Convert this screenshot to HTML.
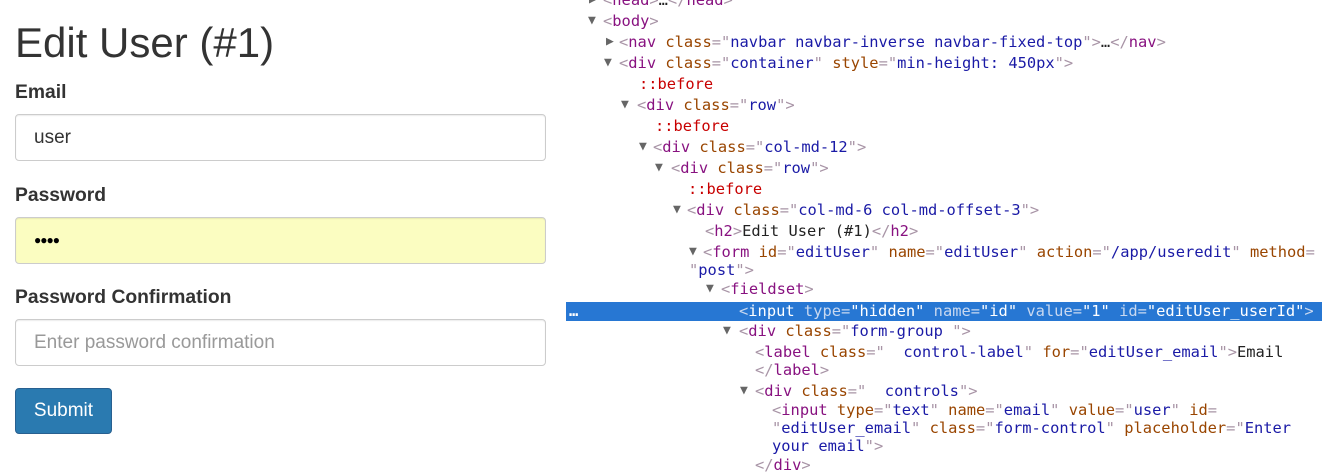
<!DOCTYPE html>
<html><head><meta charset="utf-8"><style>
body{margin:0;width:1324px;height:465px;overflow:hidden;background:#fff;position:relative;font-family:"Liberation Sans",sans-serif;color:#333}
h2{position:absolute;left:15px;top:18px;margin:0;font-size:42px;font-weight:normal;line-height:50px;color:#333}
.lb{position:absolute;left:15px;font-weight:bold;font-size:19.3px}
.in{position:absolute;left:15px;height:45px;border:1px solid #ccc;border-radius:4px;box-sizing:content-box;font-size:19px;line-height:45px;padding-left:18px;width:511px;box-shadow:inset 0 1px 1px rgba(0,0,0,.075)}
.btn{position:absolute;left:15px;top:388px;width:97px;height:46px;background:#2a7ab0;border:1px solid #286090;border-radius:4px;box-sizing:border-box;color:#fff;font-size:19px;line-height:44px;text-align:center}
.d{position:absolute;left:566px;top:0;width:758px;height:465px;font-family:"DejaVu Sans Mono","Liberation Mono",monospace;font-size:15.4px;color:#222}
.l{position:absolute;white-space:pre;line-height:20px}
.g{color:#a894a6}.t{color:#881280}.a{color:#994500}.v{color:#1a1aa6}.r{color:#c80000}
.tri{position:absolute;font-size:13px;color:#666;line-height:20px}
.sel{position:absolute;left:0;top:302px;width:756px;height:19px;background:#2777d3}
</style></head><body>
<h2>Edit User (#1)</h2>
<div class="lb" style="top:82px">Email</div>
<div class="in" style="top:114px">user</div>
<div class="lb" style="top:185px">Password</div>
<div class="in" style="top:217px;background:#fbfdc1;color:#000;font-size:12px;letter-spacing:-1px">&#9679;&#9679;&#9679;&#9679;</div>
<div class="lb" style="top:287px">Password Confirmation</div>
<div class="in" style="top:319px;color:#999">Enter password confirmation</div>
<div class="btn">Submit</div>

<div class="d">
<div class="sel"></div>
<span class="tri" style="left:23px;top:-10px">&#9654;</span><div class="l" style="left:37px;top:-10px"><span class="g">&lt;</span><span class="t">head</span><span class="g">&gt;</span>…<span class="g">&lt;/</span><span class="t">head</span><span class="g">&gt;</span></div>
<span class="tri" style="left:22px;top:11px">&#9660;</span><div class="l" style="left:37px;top:11px"><span class="g">&lt;</span><span class="t">body</span><span class="g">&gt;</span></div>
<span class="tri" style="left:40px;top:32px">&#9654;</span><div class="l" style="left:53px;top:32px"><span class="g">&lt;</span><span class="t">nav</span> <span class="a">class</span><span class="g">="</span><span class="v">navbar navbar-inverse navbar-fixed-top</span><span class="g">"&gt;</span>…<span class="g">&lt;/</span><span class="t">nav</span><span class="g">&gt;</span></div>
<span class="tri" style="left:38px;top:53px">&#9660;</span><div class="l" style="left:53px;top:53px"><span class="g">&lt;</span><span class="t">div</span> <span class="a">class</span><span class="g">="</span><span class="v">container</span><span class="g">"</span> <span class="a">style</span><span class="g">="</span><span class="v">min-height: 450px</span><span class="g">"&gt;</span></div>
<div class="l r" style="left:73px;top:74px">::before</div>
<span class="tri" style="left:55px;top:95px">&#9660;</span><div class="l" style="left:71px;top:95px"><span class="g">&lt;</span><span class="t">div</span> <span class="a">class</span><span class="g">="</span><span class="v">row</span><span class="g">"&gt;</span></div>
<div class="l r" style="left:89px;top:116px">::before</div>
<span class="tri" style="left:73px;top:137px">&#9660;</span><div class="l" style="left:87px;top:137px"><span class="g">&lt;</span><span class="t">div</span> <span class="a">class</span><span class="g">="</span><span class="v">col-md-12</span><span class="g">"&gt;</span></div>
<span class="tri" style="left:89px;top:158px">&#9660;</span><div class="l" style="left:105px;top:158px"><span class="g">&lt;</span><span class="t">div</span> <span class="a">class</span><span class="g">="</span><span class="v">row</span><span class="g">"&gt;</span></div>
<div class="l r" style="left:122px;top:179px">::before</div>
<span class="tri" style="left:107px;top:200px">&#9660;</span><div class="l" style="left:121px;top:200px"><span class="g">&lt;</span><span class="t">div</span> <span class="a">class</span><span class="g">="</span><span class="v">col-md-6 col-md-offset-3</span><span class="g">"&gt;</span></div>
<div class="l" style="left:139px;top:221px"><span class="g">&lt;</span><span class="t">h2</span><span class="g">&gt;</span>Edit User (#1)<span class="g">&lt;/</span><span class="t">h2</span><span class="g">&gt;</span></div>
<span class="tri" style="left:123px;top:242px">&#9660;</span><div class="l" style="left:137px;top:242px"><span class="g">&lt;</span><span class="t">form</span> <span class="a">id</span><span class="g">="</span><span class="v">editUser</span><span class="g">"</span> <span class="a">name</span><span class="g">="</span><span class="v">editUser</span><span class="g">"</span> <span class="a">action</span><span class="g">="</span><span class="v">/app/useredit</span><span class="g">"</span> <span class="a">method</span><span class="g">=</span></div>
<div class="l" style="left:123px;top:260px"><span class="g">"</span><span class="v">post</span><span class="g">"&gt;</span></div>
<span class="tri" style="left:140px;top:279px">&#9660;</span><div class="l" style="left:155px;top:279px"><span class="g">&lt;</span><span class="t">fieldset</span><span class="g">&gt;</span></div>
<div class="l" style="left:3px;top:301px;color:#fff;font-weight:bold">…</div>
<div class="l" style="left:173px;top:301px"><span style="color:#c8d8f0">&lt;</span><span style="color:#fff">input</span> <span style="color:#c8d8f0">type=</span><span style="color:#fff">"hidden"</span> <span style="color:#c8d8f0">name=</span><span style="color:#fff">"id"</span> <span style="color:#c8d8f0">value=</span><span style="color:#fff">"1"</span> <span style="color:#c8d8f0">id=</span><span style="color:#fff">"editUser_userId"</span><span style="color:#c8d8f0">&gt;</span></div>
<span class="tri" style="left:157px;top:321px">&#9660;</span><div class="l" style="left:173px;top:321px"><span class="g">&lt;</span><span class="t">div</span> <span class="a">class</span><span class="g">="</span><span class="v">form-group </span><span class="g">"&gt;</span></div>
<div class="l" style="left:189px;top:342px"><span class="g">&lt;</span><span class="t">label</span> <span class="a">class</span><span class="g">="</span><span class="v">  control-label</span><span class="g">"</span> <span class="a">for</span><span class="g">="</span><span class="v">editUser_email</span><span class="g">"&gt;</span>Email</div>
<div class="l" style="left:189px;top:360px"><span class="g">&lt;/</span><span class="t">label</span><span class="g">&gt;</span></div>
<span class="tri" style="left:174px;top:381px">&#9660;</span><div class="l" style="left:189px;top:381px"><span class="g">&lt;</span><span class="t">div</span> <span class="a">class</span><span class="g">="</span><span class="v">  controls</span><span class="g">"&gt;</span></div>
<div class="l" style="left:206px;top:400px"><span class="g">&lt;</span><span class="t">input</span> <span class="a">type</span><span class="g">="</span><span class="v">text</span><span class="g">"</span> <span class="a">name</span><span class="g">="</span><span class="v">email</span><span class="g">"</span> <span class="a">value</span><span class="g">="</span><span class="v">user</span><span class="g">"</span> <span class="a">id</span><span class="g">=</span></div>
<div class="l" style="left:206px;top:418px"><span class="g">"</span><span class="v">editUser_email</span><span class="g">"</span> <span class="a">class</span><span class="g">="</span><span class="v">form-control</span><span class="g">"</span> <span class="a">placeholder</span><span class="g">="</span><span class="v">Enter</span></div>
<div class="l" style="left:206px;top:436px"><span class="v">your email</span><span class="g">"&gt;</span></div>
<div class="l" style="left:189px;top:455px"><span class="g">&lt;/</span><span class="t">div</span><span class="g">&gt;</span></div>
</div>
</body></html>
